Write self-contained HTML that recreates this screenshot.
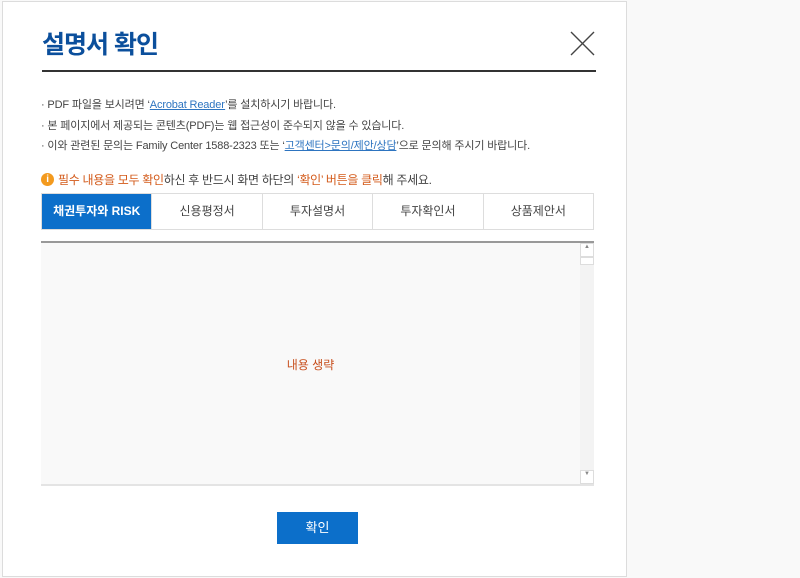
<!DOCTYPE html><html><head><meta charset="utf-8"><style>
body{margin:0;background:#f9f9f9;width:800px;height:578px;position:relative;font-family:"Liberation Sans","Noto Sans CJK KR",sans-serif;overflow:hidden}
.m{position:absolute;left:2px;top:1px;width:623px;height:574px;background:#fff;border:1px solid #dcdcdc}
.a{position:absolute}
.t{left:39px;top:23px;font-size:25px;font-weight:bold;color:#0b4f9c;letter-spacing:-1px}
.ln{left:39px;top:68px;width:554px;height:2px;background:#333}
.b{left:38px;font-size:11px;color:#444;letter-spacing:-0.15px}
.b a{color:#2d74c0;text-decoration:underline}
.o{color:#d35a1a}
.tabs{left:38px;top:191px;width:553px;height:37px;border:1px solid #ddd;display:flex;box-sizing:border-box}
.tabs div{flex:1;text-align:center;line-height:35px;font-size:12px;color:#444;border-left:1px solid #ddd}
.tabs div:first-child{border:none;background:#0c6fca;color:#fff;font-weight:bold}
.box{left:38px;top:239px;width:553px;height:245px;background:#f9f9f9;border-top:2px solid #999;border-bottom:2px solid #e4e4e4;box-sizing:border-box}
.sb{right:0;top:0;width:14px;height:100%;background:#f3f3f3}
.btn{left:274px;top:510px;width:81px;height:32px;background:#0c6fca;color:#fff;font-size:13px;text-align:center;line-height:32px}
</style></head><body><div class="m">
<div class="a t">설명서 확인</div>
<svg class="a" style="left:567px;top:29px" width="25" height="25"><path d="M1 1L24 24M24 1L1 24" stroke="#444" stroke-width="1.4"/></svg>
<div class="a ln"></div>
<div class="a b" style="top:94px">· PDF 파일을 보시려면 ‘<a>Acrobat Reader</a>’를 설치하시기 바랍니다.</div>
<div class="a b" style="top:115px">· 본 페이지에서 제공되는 콘텐츠(PDF)는 웹 접근성이 준수되지 않을 수 있습니다.</div>
<div class="a b" style="top:135px">· 이와 관련된 문의는 Family Center 1588-2323 또는 ‘<a>고객센터&gt;문의/제안/상담</a>’으로 문의해 주시기 바랍니다.</div>
<div class="a" style="left:38px;top:169px;font-size:12px;color:#444;letter-spacing:-0.3px;display:flex;align-items:center;white-space:nowrap"><span style="display:inline-block;width:13px;height:13px;border-radius:50%;background:#f39a1e;color:#fff;font-size:10px;font-weight:bold;text-align:center;line-height:13px;margin-right:4px;flex:none">i</span><span><span class="o">필수 내용을 모두 확인</span>하신 후 반드시 화면 하단의 <span class="o">‘확인’ 버튼을 클릭</span>해 주세요.</span></div>
<div class="a tabs"><div>채권투자와 RISK</div><div>신용평정서</div><div>투자설명서</div><div>투자확인서</div><div>상품제안서</div></div>
<div class="a box"><div class="a sb"><div style="height:12px;border:1px solid #ddd;background:#fff;font-size:6px;text-align:center;color:#888">▲</div><div style="height:6px;border:1px solid #ddd;background:#fff"></div><div class="a" style="bottom:0;width:12px;height:12px;border:1px solid #ddd;background:#fff;font-size:6px;text-align:center;color:#888">▼</div></div>
<div class="a" style="left:0;width:539px;top:113px;text-align:center;font-size:12px;color:#c8501e">내용 생략</div></div>
<div class="a btn">확인</div>
</div></body></html>
